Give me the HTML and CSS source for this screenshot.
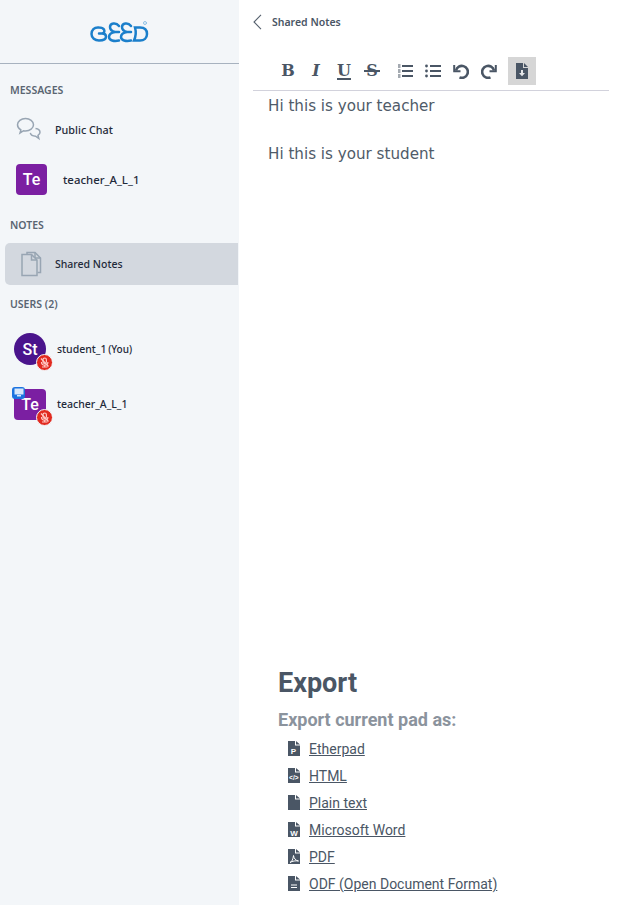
FILE: index.html
```html
<!DOCTYPE html>
<html lang="en">
<head>
    <meta charset="UTF-8">
    <title>Shared Notes</title>
    <link rel="stylesheet" href="styles.css">
</head>
<body>
<div class="app">
    <!-- Left panel -->
    <aside class="sidebar">
        <div class="logo-bar">
            <svg class="logo" width="60" height="24" viewBox="0 0 60 24" fill="none" stroke="#1b7fcb" stroke-width="2.5" stroke-linecap="round">
                <path d="M9 7.5C4 7 1.5 10 1.5 14S5 20.5 9 20.5s7-1.500 7-4-2-3-4-3H9M12 13.500c2-.5 3-2 2-4-1-1.500-3-2-5-2"/>
                <path d="M29 6c-3-4-9-3-9 1 0 3 3 4.500 5 5-3 .5-6 2-6 5 0 3.500 5 4.500 10 3.500M25 12h4"/>
                <path d="M41 6c-3-4-9-3-9 1 0 3 3 4.500 5 5-3 .5-6 2-6 5 0 3.500 5 4.500 10 3.500M37 12h4"/>
                <path d="M45 7.500h5c5 0 7 2.500 7 6.500s-3 6.500-7 6.500h-6c2-4.500 2-9.500 1-13z"/>
                <circle cx="55" cy="3" r="1.500" stroke="#8fc1e6" stroke-width="1"/>
            </svg>
        </div>

        <h2 class="section-label label-messages">MESSAGES</h2>
        <div class="row row-chat">
            <svg class="row-icon" width="28" height="28" viewBox="0 0 28 28" fill="none" stroke="#98a5b3" stroke-width="1.500">
                <path d="M10.500 2.500c-4.400 0-8 2.700-8 6.300 0 2.200 1.300 4 3.400 5.100L5 17l3.600-2.300c.6.100 1.300.2 1.900.2 4.400 0 8-2.600 8-6.100s-3.600-6.300-8-6.300z"/>
                <path d="M20.500 12.500c2.600.3 4.500 1.800 4.500 3.800 0 1.300-.8 2.400-2 3.100l.8 3.100-3.200-2.300c-2.800 0-4.800-1.400-5.300-3.300"/>
            </svg>
            <span class="row-name">Public Chat</span>
        </div>
        <div class="row row-private">
            <span class="avatar avatar-teacher avatar-small">Te</span>
            <span class="row-name">teacher_A_L_1</span>
        </div>

        <h2 class="section-label label-notes">NOTES</h2>
        <div class="row row-notes">
            <svg class="row-icon" width="22" height="26" viewBox="0 0 22 26" fill="none" stroke="#98a5b3" stroke-width="1.500">
                <path d="M7 3.500V1.500h8l5.500 5.500v14.500h-3"/>
                <path d="M15 1.500V7h5.500"/>
                <path d="M2 3.500h9.500L17 9v15.500H2z" fill="#d3d8df"/>
                <path d="M11.500 3.500V9H17"/>
            </svg>
            <span class="row-name">Shared Notes</span>
        </div>

        <h2 class="section-label label-users">USERS (2)</h2>
        <div class="user user-first">
            <div class="user-avatar">
                <span class="avatar avatar-student">St</span>
                <span class="mic-badge">
                    <svg width="11" height="11" viewBox="0 0 11 11" fill="none" stroke="#ffc9c4" stroke-width="1.200">
                        <rect x="4" y="1" width="3.400" height="5.500" rx="1.700"/>
                        <path d="M2.500 5c0 2 1.300 3.200 3.200 3.200S8.900 7 8.900 5M5.700 8.200V10M3 10h5.500M2 1.500l7.500 8"/>
                    </svg>
                </span>
            </div>
            <span class="user-name">student_1 <span class="user-you">(You)</span></span>
        </div>
        <div class="user">
            <div class="user-avatar">
                <span class="avatar avatar-teacher">Te</span>
                <span class="presenter-badge">
                    <svg width="10" height="9" viewBox="0 0 10 9">
                        <rect x="0.500" y="0.500" width="9" height="6" fill="#d8e8fa"/>
                        <rect x="3" y="7" width="4" height="1.500" fill="#d8e8fa"/>
                    </svg>
                </span>
                <span class="mic-badge">
                    <svg width="11" height="11" viewBox="0 0 11 11" fill="none" stroke="#ffc9c4" stroke-width="1.200">
                        <rect x="4" y="1" width="3.400" height="5.500" rx="1.700"/>
                        <path d="M2.500 5c0 2 1.300 3.200 3.200 3.200S8.900 7 8.900 5M5.700 8.200V10M3 10h5.500M2 1.500l7.500 8"/>
                    </svg>
                </span>
            </div>
            <span class="user-name">teacher_A_L_1</span>
        </div>
    </aside>

    <!-- Notes panel -->
    <main class="notes">
        <header class="notes-header">
            <svg width="9" height="16" viewBox="0 0 9 16" fill="none" stroke="#56616e" stroke-width="1.100">
                <path d="M8 .8 1 8l7 7.200"/>
            </svg>
            <span class="notes-title">Shared Notes</span>
        </header>

        <div class="toolbar">
            <span class="tool tool-text tool-bold">B</span>
            <span class="tool tool-text tool-italic">I</span>
            <span class="tool tool-text tool-underline">U</span>
            <span class="tool tool-text tool-strike">S</span>
            <span class="tool tool-ol">
                <svg width="16" height="14" viewBox="0 0 16 14" fill="#4a5665">
                    <rect x="5" y="1" width="11" height="2"/>
                    <rect x="5" y="6" width="11" height="2"/>
                    <rect x="5" y="11" width="11" height="2"/>
                    <rect x="1" y="0.500" width="2.500" height="1"/>
                    <rect x="1" y="2.500" width="2.500" height="1"/>
                    <rect x="1" y="5.500" width="2.500" height="1"/>
                    <rect x="1" y="7.500" width="2.500" height="1"/>
                    <rect x="1" y="10.500" width="2.500" height="1"/>
                    <rect x="1" y="12.500" width="2.500" height="1"/>
                </svg>
            </span>
            <span class="tool tool-ul">
                <svg width="16" height="14" viewBox="0 0 16 14" fill="#4a5665">
                    <rect x="5" y="1" width="11" height="2"/>
                    <rect x="5" y="6" width="11" height="2"/>
                    <rect x="5" y="11" width="11" height="2"/>
                    <circle cx="1.500" cy="2" r="1.400"/>
                    <circle cx="1.500" cy="7" r="1.400"/>
                    <circle cx="1.500" cy="12" r="1.400"/>
                </svg>
            </span>
            <span class="tool tool-undo">
                <svg width="16" height="15" viewBox="0 0 16 15" fill="none" stroke="#4a5665" stroke-width="2.600">
                    <path d="M3 6.500A6 6 0 1 1 6.500 13.400"/>
                    <path d="M1.200 1v6.300h6.300" stroke-width="2"/>
                </svg>
            </span>
            <span class="tool tool-redo">
                <svg width="16" height="15" viewBox="0 0 16 15" fill="none" stroke="#4a5665" stroke-width="2.600">
                    <path d="M13 6.500A6 6 0 1 0 9.500 13.400"/>
                    <path d="M14.800 1v6.300H8.500" stroke-width="2"/>
                </svg>
            </span>
            <span class="tool-export">
                <svg width="12" height="16" viewBox="0 0 12 16">
                    <path d="M0 0h7v5h5v11H0z" fill="#4a5665"/>
                    <path d="M8 0l4 4H8z" fill="#4a5665"/>
                    <path d="M5 7h2v3h2l-3 3.300L3 10h2z" fill="#e4e6e8"/>
                </svg>
            </span>
        </div>

        <div class="pad-text">
            <p>Hi this is your teacher</p>
            <p>&nbsp;</p>
            <p>Hi this is your student</p>
        </div>

        <section class="export">
            <h1>Export</h1>
            <h2>Export current pad as:</h2>
            <ul class="export-list">
                <li>
                    <svg width="12" height="15" viewBox="0 0 12 15"><path class="file" d="M0 0h7v4.500h5V15H0zM8 0l4 3.500H8z"/><text class="file-mark" x="5.500" y="13" text-anchor="middle">P</text></svg>
                    <a href="#">Etherpad</a>
                </li>
                <li>
                    <svg width="12" height="15" viewBox="0 0 12 15"><path class="file" d="M0 0h7v4.500h5V15H0zM8 0l4 3.500H8z"/><text class="file-mark file-mark-small" x="5.800" y="12" text-anchor="middle">&lt;/&gt;</text></svg>
                    <a href="#">HTML</a>
                </li>
                <li>
                    <svg width="12" height="15" viewBox="0 0 12 15"><path class="file" d="M0 0h7v4.500h5V15H0zM8 0l4 3.500H8z"/></svg>
                    <a href="#">Plain text</a>
                </li>
                <li>
                    <svg width="12" height="15" viewBox="0 0 12 15"><path class="file" d="M0 0h7v4.500h5V15H0zM8 0l4 3.500H8z"/><text class="file-mark" x="6" y="13.500" text-anchor="middle">W</text></svg>
                    <a href="#">Microsoft Word</a>
                </li>
                <li>
                    <svg width="12" height="15" viewBox="0 0 12 15"><path class="file" d="M0 0h7v4.500h5V15H0zM8 0l4 3.500H8z"/><path d="M2 13.500c2-1 3-3 3.500-7 .5 3 2 5 5 5.500-3-.500-6 0-8.500 1.500z" fill="none" stroke="#fff" stroke-width="1"/></svg>
                    <a href="#">PDF</a>
                </li>
                <li>
                    <svg width="12" height="15" viewBox="0 0 12 15"><path class="file" d="M0 0h7v4.500h5V15H0zM8 0l4 3.500H8z"/><path d="M3 8.500h6v1H3zM3 11h6v1H3z" fill="#fff"/></svg>
                    <a href="#">ODF (Open Document Format)</a>
                </li>
            </ul>
        </section>
    </main>
</div>
</body>
</html>
```

FILE: styles.css
```css
html, body {
    margin: 0;
    height: 100%;
    background-color: #ffffff;
}
.app {
    display: flex;
    height: 905px;
    overflow: hidden;
}
.sidebar {
    width: 239px;
    flex-shrink: 0;
    background-color: #f3f6f9;
    font-family: 'Noto Sans', sans-serif;
    color: #1f2a3a;
}
.logo-bar {
    height: 63px;
    box-sizing: border-box;
    display: flex;
    justify-content: center;
    padding: 20px 0 0 0;
    box-shadow: 0 1px 0 #a7b2bf;
}
.logo {
    display: block;
}
.section-label {
    font-size: 10.5px;
    line-height: 14px;
    font-weight: 600;
    color: #5a6572;
    margin: 0 0 0 10px;
}
.label-messages {
    margin-top: 20px;
}
.label-notes {
    margin-top: 23px;
}
.label-users {
    margin-top: 12px;
}
.row {
    display: flex;
    align-items: center;
}
.row-name, .user-name {
    font-size: 10.5px;
    font-weight: 500;
}
.row-chat {
    height: 40px;
    margin-top: 13px;
    padding-left: 15px;
}
.row-chat .row-name {
    margin: 0 0 2px 12px;
    font-size: 10.8px;
}
.row-private {
    margin-top: 14px;
    padding-left: 16px;
}
.row-private .row-name {
    margin-left: 16px;
    font-size: 11.4px;
}
.row-notes {
    height: 42px;
    margin: 11px 1px 0 5px;
    padding-left: 15px;
    background-color: #d3d8df;
    border-radius: 5px 0 0 5px;
}
.row-notes .row-name {
    margin-left: 13px;
}
.avatar {
    width: 32px;
    height: 31px;
    border-radius: 4px;
    display: flex;
    align-items: center;
    justify-content: center;
    color: #ffffff;
    font-family: 'Roboto', sans-serif;
    font-size: 16px;
    font-weight: 500;
}
.avatar-small {
    width: 31px;
}
.avatar-teacher {
    background-color: #7b1fa2;
}
.avatar-student {
    height: 32px;
    background-color: #4a148c;
    border-radius: 50%;
}
.user {
    display: flex;
    align-items: center;
    height: 32px;
    padding-left: 14px;
    margin-top: 23px;
}
.user-first {
    margin-top: 22px;
}
.user-name {
    margin-left: 11px;
}
.user-you {
    font-size: 10px;
    margin-left: -1px;
}
.user-avatar {
    position: relative;
}
.mic-badge {
    position: absolute;
    left: 22px;
    bottom: -6px;
    width: 15px;
    height: 15px;
    border-radius: 50%;
    background-color: #e12a20;
    border: 1px solid #f3f6f9;
    display: flex;
    align-items: center;
    justify-content: center;
}
.presenter-badge {
    position: absolute;
    left: -2px;
    top: -2px;
    width: 13px;
    height: 12px;
    border-radius: 3px;
    background-color: #1b73e0;
    display: flex;
    align-items: center;
    justify-content: center;
}
.notes {
    flex: 1;
    min-width: 0;
    display: flex;
    flex-direction: column;
    padding: 0 9px 0 14px;
}
.notes-header {
    display: flex;
    align-items: center;
    height: 16px;
    margin-top: 14px;
}
.notes-title {
    margin-left: 10px;
    font-family: 'Noto Sans', sans-serif;
    font-size: 10.5px;
    font-weight: 600;
    color: #4a5665;
}
.toolbar {
    display: flex;
    align-items: center;
    box-sizing: border-box;
    height: 34px;
    margin-top: 27px;
    padding: 0 0 5px 21px;
    border-bottom: 1px solid #d2d2dc;
}
.tool {
    width: 28px;
    display: flex;
    justify-content: center;
    color: #4a5665;
}
.tool-text {
    position: relative;
    font-family: 'DejaVu Serif', serif;
    font-size: 16px;
    line-height: 18px;
    font-weight: 700;
}
.tool-italic {
    font-style: italic;
}
.tool-underline {
    text-decoration: underline;
    text-decoration-thickness: 2px;
    text-underline-offset: 2px;
}
.tool-strike::after {
    content: "";
    position: absolute;
    left: 6px;
    right: 6px;
    top: 8px;
    height: 2px;
    background-color: #4a5665;
}
.tool-ol {
    margin-left: 5px;
}
.tool-export {
    width: 28px;
    height: 28px;
    margin-left: 5px;
    background-color: #d6d6d6;
    display: flex;
    align-items: center;
    justify-content: center;
}
.pad-text {
    margin-top: 3px;
    padding-left: 15px;
    font-family: 'DejaVu Sans', sans-serif;
    font-size: 15.15px;
    line-height: 24px;
    color: #4f5b69;
}
.pad-text p {
    margin: 0;
}
.export {
    margin-top: auto;
    padding: 0 0 8px 25px;
    font-family: 'Roboto', sans-serif;
}
.export h1 {
    margin: 0;
    font-size: 27px;
    line-height: 34px;
    font-weight: 700;
    color: #4a5665;
}
.export h2 {
    margin: 8px 0 0 0;
    font-size: 18px;
    line-height: 24px;
    font-weight: 700;
    color: #8b939d;
}
.export-list {
    list-style: none;
    margin: 3px 0 0 0;
    padding: 0 0 0 10px;
}
.export-list li {
    display: flex;
    align-items: center;
    height: 27px;
    font-size: 14px;
}
.export-list svg {
    flex-shrink: 0;
    margin-right: 9px;
}
.export-list a {
    color: #4a5665;
}
.file {
    fill: #4a5665;
}
.file-mark {
    fill: #ffffff;
    font-family: 'Liberation Sans', sans-serif;
    font-size: 8px;
    font-weight: 700;
}
.file-mark-small {
    font-size: 6.5px;
}
```
